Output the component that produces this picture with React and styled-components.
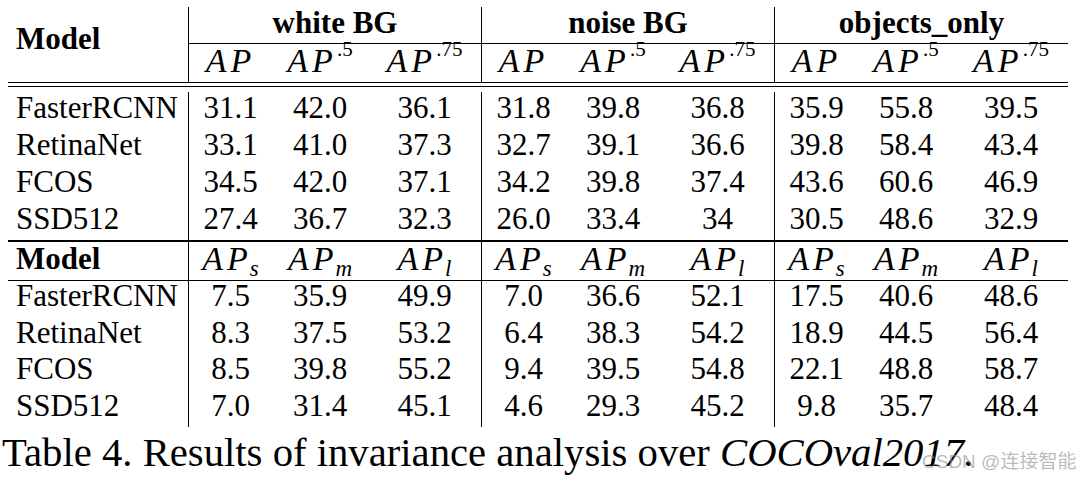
import React from 'react';
import styled, { createGlobalStyle } from 'styled-components';

const COLS = '180px 84px 96px 113px 84px 96px 113px 84px 96px 114px';

const groups = ['white BG', 'noise BG', 'objects_only'];

const topHeads = [{ sup: '' }, { sup: '.5' }, { sup: '.75' }];
const bottomHeads = [{ sub: 's' }, { sub: 'm' }, { sub: 'l' }];

const topRows = [
    ['FasterRCNN', '31.1', '42.0', '36.1', '31.8', '39.8', '36.8', '35.9', '55.8', '39.5'],
    ['RetinaNet', '33.1', '41.0', '37.3', '32.7', '39.1', '36.6', '39.8', '58.4', '43.4'],
    ['FCOS', '34.5', '42.0', '37.1', '34.2', '39.8', '37.4', '43.6', '60.6', '46.9'],
    ['SSD512', '27.4', '36.7', '32.3', '26.0', '33.4', '34', '30.5', '48.6', '32.9'],
];

const bottomRows = [
    ['FasterRCNN', '7.5', '35.9', '49.9', '7.0', '36.6', '52.1', '17.5', '40.6', '48.6'],
    ['RetinaNet', '8.3', '37.5', '53.2', '6.4', '38.3', '54.2', '18.9', '44.5', '56.4'],
    ['FCOS', '8.5', '39.8', '55.2', '9.4', '39.5', '54.8', '22.1', '48.8', '58.7'],
    ['SSD512', '7.0', '31.4', '45.1', '4.6', '29.3', '45.2', '9.8', '35.7', '48.4'],
];

const GlobalStyle = createGlobalStyle`
    html, body {
        margin: 0;
        padding: 0;
        background: #ffffff;
        overflow: hidden;
    }
    body {
        font-family: "Liberation Serif", "Times New Roman", serif;
        color: #000000;
    }
`;

const MathTerm = ({ sup, sub }) => (
    <StyledMath>
        AP
        {sup ? <Sup>{sup}</Sup> : null}
        {sub ? <Sub>{sub}</Sub> : null}
    </StyledMath>
);

const DataRow = ({ row, $h, $lh }) => (
    <StyledDataRow $h={$h} $lh={$lh}>
        <ModelCell>{row[0]}</ModelCell>
        {row.slice(1).map((value, index) => (
            <Cell key={index} $sep={index % 3 === 0}>{value}</Cell>
        ))}
    </StyledDataRow>
);

const App = () => {
    return (
        <Page>
            <GlobalStyle />
            <Table>
                <HeaderBand>
                    <ModelHead>Model</ModelHead>
                    {groups.map((name) => (
                        <GroupTitle key={name}>{name}</GroupTitle>
                    ))}
                    {groups.map((name) =>
                        topHeads.map((head, index) => (
                            <HeadCell key={name + index} $sep={index === 0}>
                                <MathTerm sup={head.sup} />
                            </HeadCell>
                        ))
                    )}
                </HeaderBand>
                <DoubleRule />
                {topRows.map((row) => (
                    <DataRow key={row[0]} row={row} $h={37} $lh={31} />
                ))}
                <ThickRule />
                <SubHeadRow>
                    <ModelCell $bold>Model</ModelCell>
                    {groups.map((name) =>
                        bottomHeads.map((head, index) => (
                            <HeadCell key={name + index} $sep={index === 0}>
                                <MathTerm sub={head.sub} />
                            </HeadCell>
                        ))
                    )}
                </SubHeadRow>
                {bottomRows.map((row) => (
                    <DataRow key={row[0]} row={row} $h={36.5} $lh={29} />
                ))}
            </Table>
            <Caption>
                Table 4. Results of invariance analysis over <em>COCOval2017.</em>
            </Caption>
            <Watermark>CSDN @连接智能</Watermark>
        </Page>
    );
};

const Page = styled.div`
    position: relative;
    width: 1084px;
    height: 481px;
    padding-top: 7px;
    box-sizing: border-box;
`;

const Table = styled.div`
    display: flex;
    flex-direction: column;
    width: 1060px;
    margin-left: 8px;
    font-size: 31px;
`;

const HeaderBand = styled.div`
    display: grid;
    grid-template-columns: ${COLS};
    grid-template-rows: 37px 38px;
`;

const ModelHead = styled.div`
    grid-row: 1 / span 2;
    padding: 15px 0 0 8px;
    font-weight: bold;
    line-height: 34px;
`;

const GroupTitle = styled.div`
    grid-column: span 3;
    box-sizing: border-box;
    border-left: 1px solid #000;
    border-bottom: 1px solid #000;
    text-align: center;
    font-weight: bold;
    line-height: 32px;
`;

const Cell = styled.div`
    box-sizing: border-box;
    border-left: ${(p) => (p.$sep ? '1px solid #000' : 'none')};
    text-align: center;
    white-space: nowrap;
`;

const HeadCell = styled(Cell)`
    line-height: 33px;
`;

const ModelCell = styled.div`
    padding-left: 8px;
    font-weight: ${(p) => (p.$bold ? 'bold' : 'normal')};
    white-space: nowrap;
`;

const DoubleRule = styled.div`
    box-sizing: border-box;
    height: 5px;
    margin-bottom: 5px;
    border-top: 1px solid #000;
    border-bottom: 1px solid #000;
`;

const ThickRule = styled.div`
    height: 2px;
    background: #000;
`;

const StyledDataRow = styled.div`
    display: grid;
    grid-template-columns: ${COLS};
    height: ${(p) => p.$h}px;
    line-height: ${(p) => p.$lh}px;
`;

const SubHeadRow = styled.div`
    display: grid;
    grid-template-columns: ${COLS};
    box-sizing: border-box;
    height: 39px;
    line-height: 34px;
    border-bottom: 1px solid #000;
`;

const StyledMath = styled.span`
    font-style: italic;
    font-size: 34px;
    letter-spacing: 4px;
`;

const Sup = styled.span`
    position: relative;
    top: -16px;
    font-style: normal;
    font-size: 21px;
    letter-spacing: 0;
`;

const Sub = styled.span`
    position: relative;
    top: 6px;
    margin-left: -2px;
    font-size: 23px;
    letter-spacing: 0;
`;

const Caption = styled.div`
    margin: 4px 0 0 2px;
    font-size: 40.7px;
    line-height: 44px;
    white-space: nowrap;

    em {
        font-style: italic;
    }
`;

const Watermark = styled.div`
    position: absolute;
    left: 922px;
    top: 452px;
    font-family: "Liberation Sans", "Noto Sans CJK SC", sans-serif;
    font-size: 19px;
    line-height: 20px;
    color: rgba(140, 140, 140, 0.6);
    white-space: nowrap;
`;

export default App;
